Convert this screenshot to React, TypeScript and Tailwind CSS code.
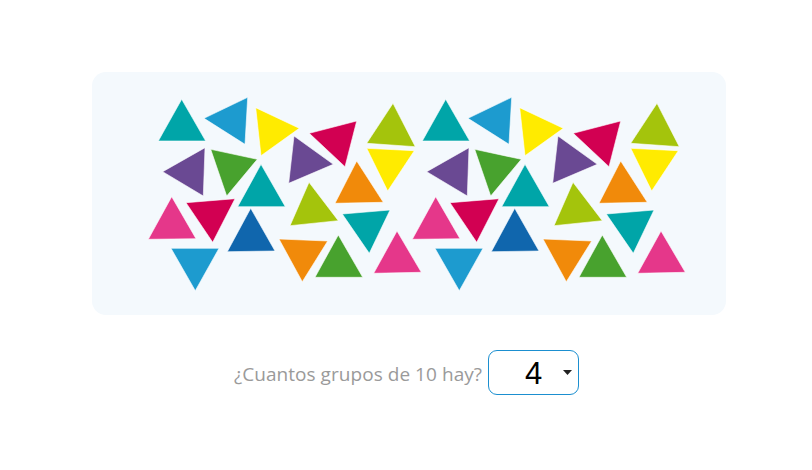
import React from 'react';

// one group of 20 triangles, page coordinates
const TRIANGLES: { pts: string; fill: string }[] = [
  { pts: '181.7,99.3 158.3,141 205.7,141', fill: '#00a5a8' },
  { pts: '204,118.3 247.7,97.3 245,144.3', fill: '#1d9bcf' },
  { pts: '255.7,107.7 299.3,128.3 261,155.7', fill: '#ffeb00' },
  { pts: '309.3,133.3 356.7,121 345,166.7', fill: '#d20052' },
  { pts: '393,103.3 366.7,143.3 415.3,146.7', fill: '#a4c40c' },
  { pts: '366.7,148.3 414.3,150.7 387.7,191', fill: '#ffeb00' },
  { pts: '162.7,171.7 205,147.7 203.3,196', fill: '#6a4993' },
  { pts: '210.7,149.3 257.3,159.3 226.7,196', fill: '#48a22e' },
  { pts: '294,136 333.3,164.3 288.7,183.3', fill: '#6a4993' },
  { pts: '261,164.3 237.7,206.7 285.3,206.7', fill: '#00a5a8' },
  { pts: '356.7,161 335,203.3 383.3,202.3', fill: '#f18a0a' },
  { pts: '309,182.3 290,225.7 338.3,220.7', fill: '#a4c40c' },
  { pts: '171.7,196.7 148.3,239.3 196,238.7', fill: '#e5378a' },
  { pts: '186,202.7 235,198.7 212.7,242.3', fill: '#d20052' },
  { pts: '250.7,208.3 227.3,251.7 275,251', fill: '#1066ad' },
  { pts: '342.3,214 390,210 369.3,253.3', fill: '#00a5a8' },
  { pts: '171,248.3 219,248.3 195.3,290.7', fill: '#1d9bcf' },
  { pts: '279,239 327.7,241 302.3,281.7', fill: '#f18a0a' },
  { pts: '338.3,235 315,277.3 362.7,277.3', fill: '#48a22e' },
  { pts: '397,231 373.7,273.3 421.3,272.3', fill: '#e5378a' },
];

function TriangleGroup({ dx }: { dx: number }) {
  return (
    <g transform={`translate(${dx} 0)`}>
      {TRIANGLES.map((t, i) => (
        <polygon key={i} points={t.pts} fill={t.fill} stroke="#ffffff" strokeWidth="0.6" strokeLinejoin="round" />
      ))}
    </g>
  );
}

export default function App() {
  return (
    <div className="w-[812px] h-[470px] bg-white pt-[72px]" style={{ fontFamily: '"Open Sans", "Noto Sans", sans-serif' }}>
      {/* Picture */}
      <div className="ml-[92px] w-[634px] h-[243px] rounded-[14px] bg-[#f4f9fd] overflow-hidden">
        <svg width="634" height="243" viewBox="92 72 634 243">
          <TriangleGroup dx={0} />
          <TriangleGroup dx={264} />
        </svg>
      </div>

      {/* Question */}
      <div className="mt-[35px] flex items-center justify-center gap-[6px] pl-[1px]">
        <span className="text-[19px] tracking-[0.05px] text-[#9a9a9a] pt-[3px]">¿Cuantos grupos de 10 hay?</span>
        <div className="relative w-[91px] h-[45px] rounded-[9px] border border-[#1b8fd0] bg-white flex items-center">
          <span className="ml-[36px] mt-[1px] text-[31px] leading-none text-black font-medium" style={{ fontFamily: '"Liberation Sans", Arial, sans-serif' }}>4</span>
          <svg className="absolute right-[6px] top-[19px]" width="9" height="5" viewBox="0 0 9 5">
            <polygon points="0,0 9,0 4.5,5" fill="#222" />
          </svg>
        </div>
      </div>
    </div>
  );
}
